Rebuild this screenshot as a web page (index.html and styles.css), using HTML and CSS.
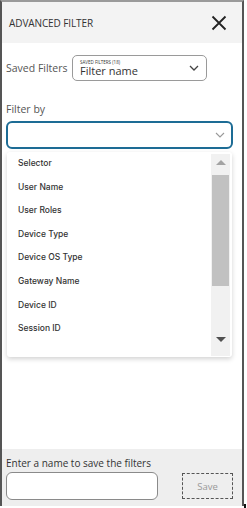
FILE: index.html
```html
<!DOCTYPE html>
<html>
<head>
<meta charset="utf-8">
<link rel="stylesheet" href="styles.css">
</head>
<body>
<div class="panel">
  <div class="header">
    <span class="title">ADVANCED FILTER</span>
    <svg class="close" width="16" height="16" viewBox="0 0 16 16"><path d="M1.5 1.5 L14.5 14.5 M14.5 1.5 L1.5 14.5" stroke="#222" stroke-width="1.8" fill="none"/></svg>
  </div>
  <div class="content">
    <div class="saved-row">
      <span class="saved-label">Saved Filters</span>
      <div class="saved-select">
        <div class="saved-text">
          <span class="saved-small">SAVED FILTERS (18)</span>
          <span class="saved-name">Filter name</span>
        </div>
        <svg class="chev" width="10" height="6" viewBox="0 0 10 6"><path d="M1 1 L5 5 L9 1" stroke="#444" stroke-width="1.3" fill="none"/></svg>
      </div>
    </div>
    <div class="filter-label">Filter by</div>
    <div class="filter-select">
      <svg class="chev" width="10" height="6" viewBox="0 0 10 6"><path d="M1 1 L5 5 L9 1" stroke="#999" stroke-width="1.1" fill="none"/></svg>
    </div>
    <div class="dropdown">
      <ul class="items">
        <li>Selector</li>
        <li>User Name</li>
        <li>User Roles</li>
        <li>Device Type</li>
        <li>Device OS Type</li>
        <li>Gateway Name</li>
        <li>Device ID</li>
        <li>Session ID</li>
      </ul>
      <div class="scrollbar">
        <div class="arrow-up"></div>
        <div class="thumb"></div>
        <div class="spacer"></div>
        <div class="arrow-down"></div>
      </div>
    </div>
  </div>
  <div class="footer">
    <div class="footer-label">Enter a name to save the filters</div>
    <div class="footer-row">
      <div class="name-input"></div>
      <div class="save-btn">Save</div>
    </div>
  </div>
  <span class="cursor-mark"></span>
</div>
</body>
</html>
```
FILE: styles.css
```css
* { box-sizing: border-box; }
html, body { margin: 0; padding: 0; background: #fff; }
body { font-family: "Open Sans", "Liberation Sans", sans-serif; width: 247px; height: 508px; overflow: hidden; }
.panel {
  position: relative;
  width: 244px;
  height: 506px;
  border-top: 2px solid #9a9a9a;
  border-left: 2px solid #555;
  border-right: 2px solid #555;
  display: flex;
  flex-direction: column;
}
.header {
  height: 41px;
  background: #f3f3f3;
  display: flex;
  align-items: center;
  justify-content: space-between;
  padding: 0 15px 0 7px;
}
.title { font-size: 10px; color: #333; letter-spacing: -0.1px; }
.close { display: block; }
.content { padding: 0 7px 0 4px; }
.saved-row { display: flex; align-items: center; margin-top: 12px; }
.saved-label { font-size: 10.5px; color: #555; width: 66px; }
.saved-select {
  width: 135px; height: 26px;
  border: 1px solid #9a9a9a; border-radius: 5px;
  display: flex; align-items: center; justify-content: space-between;
  padding: 0 7px 0 7px;
}
.saved-text { display: flex; flex-direction: column; line-height: 1; }
.saved-small { font-size: 4.5px; color: #333; margin-bottom: 1px; }
.saved-name { font-size: 11px; color: #333; }
.filter-label { font-size: 10.5px; color: #555; margin-top: 21px; }
.filter-select {
  margin-top: 5px; height: 28px; width: 227px;
  border: 2px solid #1d6c95; border-radius: 6px;
  display: flex; align-items: center; justify-content: flex-end;
  padding-right: 6px;
}
.dropdown {
  margin: 3px 0 0 1px; width: 225px; height: 205px;
  background: #fff; border-radius: 3px;
  box-shadow: 0 2px 5px rgba(0,0,0,0.18);
  display: flex; padding: 2px 2px 1px 0;
}
.items { list-style: none; margin: 0; padding: 0; flex: 1; }
.items li {
  height: 23.6px; line-height: 19px; padding-left: 11px;
  font-family: "Inter", "Open Sans", sans-serif;
  font-size: 8.5px; font-weight: 500; color: #333;
}
.scrollbar { width: 19px; background: #f1f1f1; display: flex; flex-direction: column; align-items: center; }
.arrow-up { width: 0; height: 0; margin-top: 6px; border-left: 5px solid transparent; border-right: 5px solid transparent; border-bottom: 5px solid #a3a3a3; }
.thumb { width: 17px; height: 111px; background: #c1c1c1; margin-top: 10px; }
.spacer { flex: 1; }
.arrow-down { width: 0; height: 0; margin-bottom: 14px; border-left: 5px solid transparent; border-right: 5px solid transparent; border-top: 5px solid #505050; }
.footer {
  margin-top: auto; height: 57px; background: #eeeeee;
  padding: 7px 6px 0 4px;
}
.footer-label { font-size: 10px; color: #333; line-height: 14px; }
.footer-row { display: flex; justify-content: space-between; align-items: center; margin-top: 2px; }
.name-input { width: 152px; height: 28px; background: #fff; border: 1.5px solid #8a8a8a; border-radius: 6px; }
.save-btn {
  width: 51px; height: 26px; border: 1px dashed #555; margin-right: 3px;
  display: flex; align-items: center; justify-content: center;
  font-size: 9.5px; color: #999;
}
.cursor-mark { position: absolute; right: -4px; bottom: -3px; width: 2px; height: 5px; background: #111; }
```
